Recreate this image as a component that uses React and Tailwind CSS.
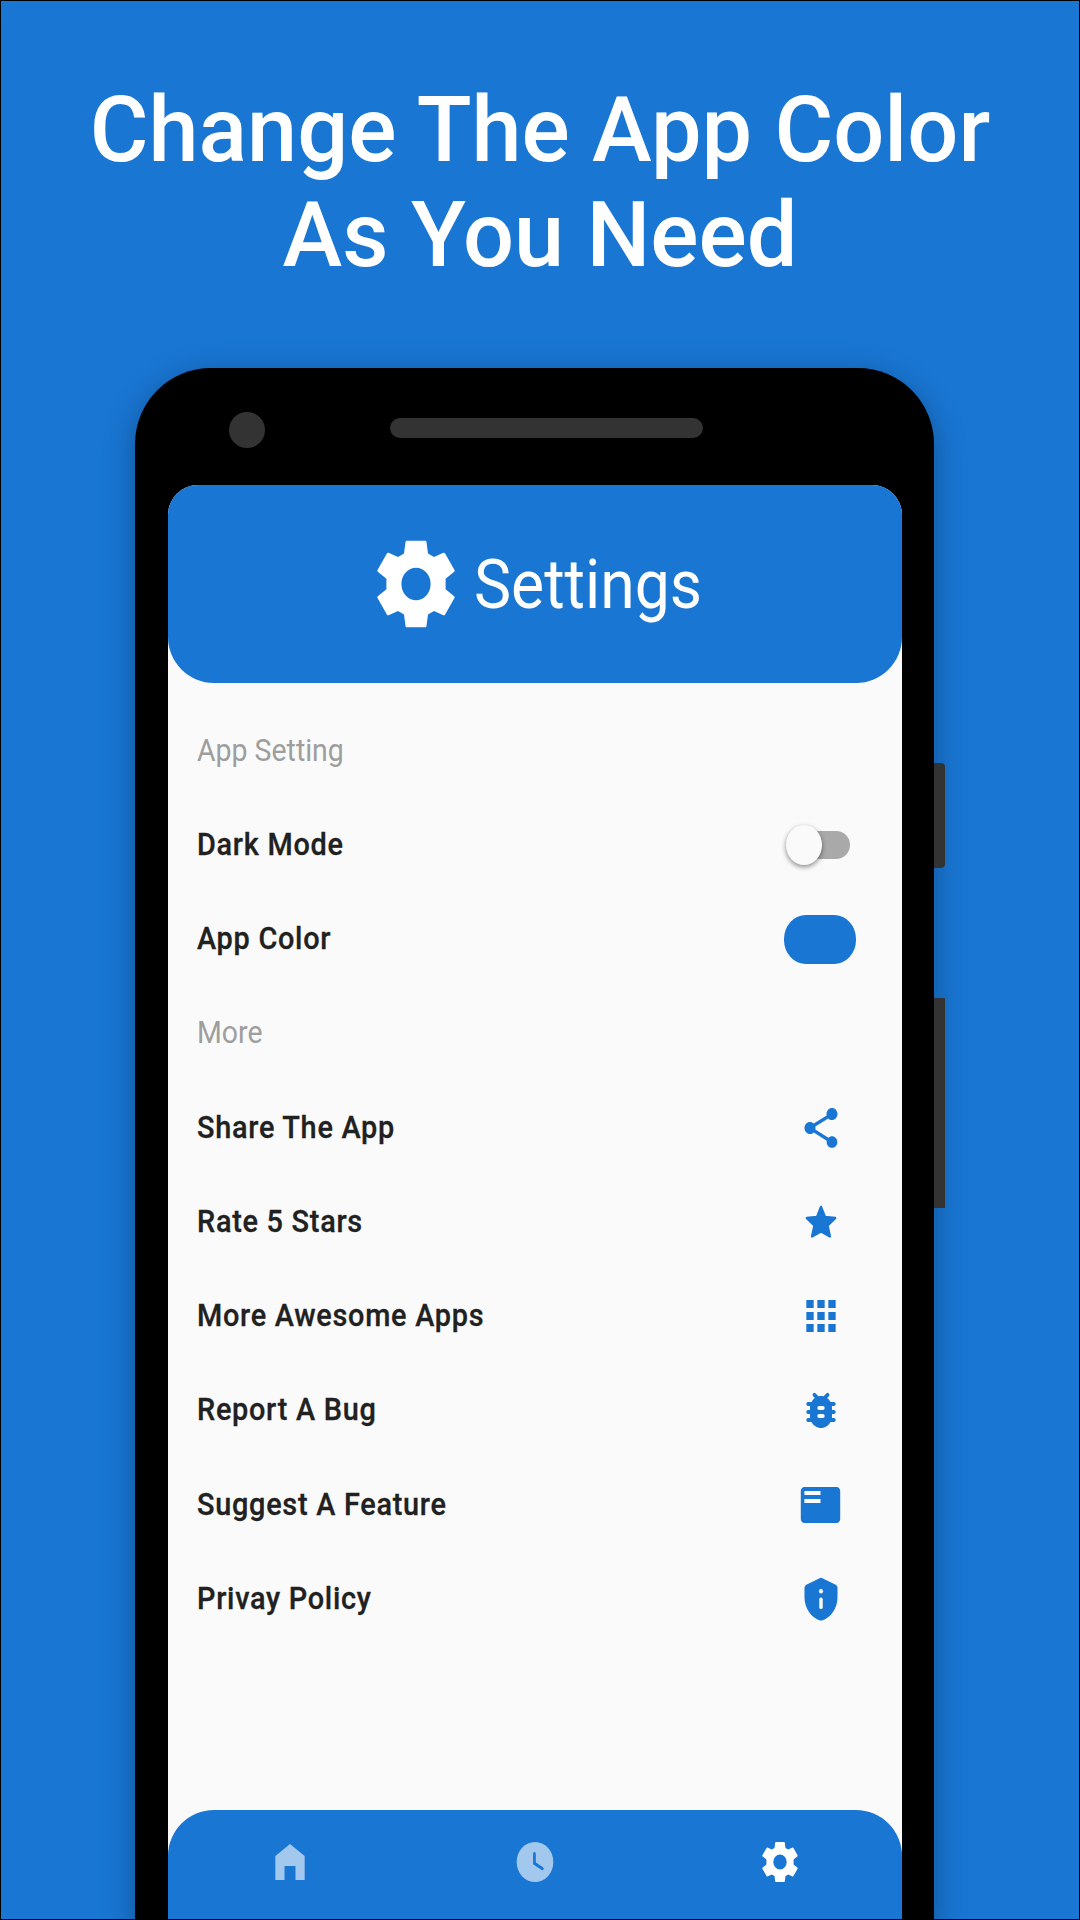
import { MdShare, MdApps, MdFeaturedPlayList } from "react-icons/md";

const icon = "h-[48px] w-[44px]";

function Glyph({ className = icon, children }) {
  return (
    <svg viewBox="0 0 24 24" preserveAspectRatio="none" fill="currentColor" className={className}>
      {children}
    </svg>
  );
}

function Gear({ className }) {
  return (
    <Glyph className={className}>
      <path fillRule="evenodd" d="M9.4 2.2q.05-.2.25-.2h4.7q.2 0 .25.2l.4 2.75 1.5.8 2.35-.95q.25-.1.4.1l2.4 3.9q.1.2-.1.35L19.4 10.8v2.4l2.15 1.65q.2.15.1.35l-2.4 3.9q-.15.2-.4.1l-2.35-.95-1.5.8-.4 2.75q-.05.2-.25.2h-4.7q-.2 0-.25-.2L9 19.05l-1.5-.8-2.35.95q-.25.1-.4-.1l-2.4-3.9q-.1-.2.1-.35L4.6 13.2v-2.4L2.45 9.15q-.2-.15-.1-.35l2.4-3.9q.15-.2.4-.1l2.35.95 1.5-.8zM12 8.23a3.65 3.77 0 1 0 0 7.54 3.65 3.77 0 1 0 0-7.54z" />
    </Glyph>
  );
}

function Star() {
  return (
    <Glyph>
      <path d="M12 4.5l2.15 5.05 5.6.5-4.2 3.65 1.3 5.5L12 16.7l-4.85 2.5 1.3-5.5-4.2-3.65 5.6-.5z" stroke="currentColor" strokeWidth="1.3" strokeLinejoin="round" />
    </Glyph>
  );
}

function Bug() {
  return (
    <Glyph>
      <path d="M19 8h-1.81c-.45-.78-1.07-1.45-1.82-1.96l.93-.93a.996.996 0 1 0-1.41-1.41l-1.47 1.47C12.96 5.06 12.49 5 12 5s-.96.06-1.41.17L9.11 3.7A.996.996 0 1 0 7.7 5.11l.92.93C7.88 6.55 7.26 7.22 6.81 8H5c-.55 0-1 .45-1 1s.45 1 1 1h1.09c-.05.33-.09.66-.09 1v1H5c-.55 0-1 .45-1 1s.45 1 1 1h1v1c0 .34.04.67.09 1H5c-.55 0-1 .45-1 1s.45 1 1 1h1.81c1.04 1.79 2.97 3 5.19 3s4.15-1.21 5.19-3H19c.55 0 1-.45 1-1s-.45-1-1-1h-1.09c.05-.33.09-.66.09-1v-1h1c.55 0 1-.45 1-1s-.45-1-1-1h-1v-1c0-.34-.04-.67-.09-1H19c.55 0 1-.45 1-1s-.45-1-1-1zm-6 8h-2c-.55 0-1-.45-1-1s.45-1 1-1h2c.55 0 1 .45 1 1s-.45 1-1 1zm0-4h-2c-.55 0-1-.45-1-1s.45-1 1-1h2c.55 0 1 .45 1 1s-.45 1-1 1z" />
    </Glyph>
  );
}

function Shield() {
  return (
    <Glyph>
      <path d="M11.5 1.5q.5-.2 1 0l7.5 3.4q1 .5 1 1.5v4.8c0 5.4-3.7 10.2-8.5 11.5q-.5.1-1 0C6.7 21.4 3 16.6 3 11.2V6.4q0-1 1-1.5z" />
      <circle cx="12" cy="8.1" r="1.1" fill="#fafafa" />
      <path d="M12 12.2v3.9" stroke="#fafafa" strokeWidth="1.9" strokeLinecap="round" />
    </Glyph>
  );
}

function Row({ label, muted, children }) {
  return (
    <div className="flex h-[94.2px] items-center justify-between">
      <span className={muted
        ? "ml-px origin-left scale-x-[0.918] whitespace-nowrap text-[31px] text-[#9e9e9e]"
        : "mb-[2px] ml-[0.5px] origin-left scale-x-[0.902] whitespace-nowrap text-[32px] font-medium tracking-[0.8px] text-[#212121] [-webkit-text-stroke:0.3px_#212121]"}>{label}</span>
      <div className="flex w-[72px] justify-center text-[#1976d3]">{children}</div>
    </div>
  );
}

export default function App() {
  return (
    <div className="relative flex h-[1920px] w-[1080px] flex-col overflow-hidden border border-black bg-[#1976d3] font-['Roboto',sans-serif]">
      <h1 className="mt-[77px] text-center text-[90px] leading-[105px] font-medium text-white">
        Change The App Color<br />As You Need
      </h1>
      <div className="relative mt-[79.5px] ml-[134px] flex h-[1560px] w-[799px] shrink-0 flex-col rounded-t-[76px] bg-black px-[33px] shadow-[0_8px_32px_rgba(0,0,0,0.3)]">
        <div className="absolute top-[395px] left-[799px] h-[105px] w-[11px] rounded-r-[4px] bg-[#333]" />
        <div className="absolute top-[630px] left-[799px] h-[210px] w-[11px] bg-[#333]" />
        <div className="flex h-[117.5px] shrink-0 items-start">
          <div className="mt-[44.5px] ml-[61px] h-[36px] w-[36px] rounded-full bg-[#333]" />
          <div className="mt-[50.5px] ml-[125px] h-[20px] w-[313px] rounded-full bg-[#333]" />
        </div>
        <main className="flex h-[1434px] w-[734px] shrink-0 flex-col overflow-hidden rounded-t-[30px] bg-[#fafafa]">
          <header className="flex h-[198px] shrink-0 items-center rounded-b-[46px] bg-[#1976d3] pl-[200px] text-white">
            <Gear className="h-[104px] w-[96px] shrink-0" />
            <span className="mt-px ml-[10px] origin-left scale-x-[0.918] text-[68px] leading-none">Settings</span>
          </header>
          <section className="mt-[21px] pr-[46px] pl-[28px]">
            <Row label="App Setting" muted />
            <Row label="Dark Mode">
              <div className="relative flex h-[40px] w-[64px] items-center">
                <div className="ml-[6px] h-[28px] w-[56px] rounded-full bg-[#a9a9a9]" />
                <div className="absolute left-[-2px] h-[40px] w-[36px] rounded-[50%] bg-[#fafafa] shadow-[0_2px_5px_rgba(0,0,0,0.45)]" />
              </div>
            </Row>
            <Row label="App Color"><div className="h-[49px] w-[72px] rounded-[22px/24px] bg-[#1976d3]" /></Row>
            <Row label="More" muted />
            <div className="[&_svg]:ml-px">
              <Row label="Share The App"><MdShare preserveAspectRatio="none" className={icon} /></Row>
              <Row label="Rate 5 Stars"><Star /></Row>
              <Row label="More Awesome Apps"><MdApps preserveAspectRatio="none" className={icon} /></Row>
              <Row label="Report A Bug"><Bug /></Row>
              <Row label="Suggest A Feature"><MdFeaturedPlayList preserveAspectRatio="none" className="h-[48px] w-[43px]" /></Row>
              <Row label="Privay Policy"><Shield /></Row>
            </div>
          </section>
          <nav className="mt-auto flex h-[109px] shrink-0 items-start justify-around rounded-t-[46px] bg-[#1976d3] pt-[28px] text-[#a3c8ed]">
            <Glyph><path d="M4 21V9l8-6 8 6v12h-5v-7H9v7z" /></Glyph>
            <Glyph>
              <circle cx="12" cy="12" r="10" />
              <path d="M11.7 7.7v5l4.3 2.6" fill="none" stroke="#1976d3" strokeWidth="1.5" strokeLinecap="round" />
            </Glyph>
            <Gear className="h-[48px] w-[44px] text-white" />
          </nav>
        </main>
      </div>
    </div>
  );
}
